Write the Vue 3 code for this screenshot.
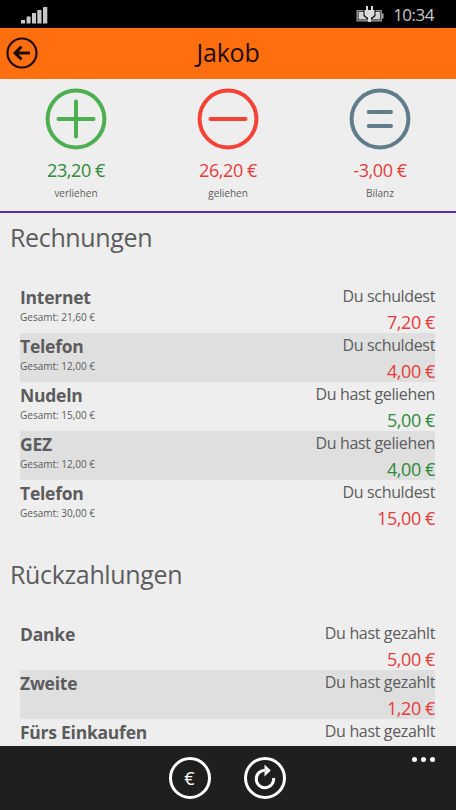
<template>
  <div class="phone">
    <div class="status">
      <svg class="signal" width="28" height="18" viewBox="0 0 28 18" fill="#c8c8c8">
        <rect x="0" y="14" width="4" height="3.5" />
        <rect x="5.6" y="10.5" width="4" height="7" />
        <rect x="11" y="7" width="4" height="10.5" />
        <rect x="16.3" y="4" width="4.2" height="13.5" />
        <rect x="22" y="1" width="4.3" height="16.5" />
      </svg>
      <div class="status-right">
        <svg class="battery" width="29" height="16" viewBox="0 0 29 16">
          <rect x="2.2" y="4.8" width="24" height="10" fill="none" stroke="#999" stroke-width="1.4" />
          <rect x="3.5" y="6" width="21.500" height="7.500" fill="#d4d4d4" />
          <rect x="26.500" y="7.500" width="2" height="5" fill="#aaa" />
          <path d="M8.500 3.500h12v6.500l-3 2.500v.500h-6v-.5l-3-2.500z" fill="#000" />
          <path d="M11 0h2v4h3v-4h2v4h1.500v5l-2.500 2.500h-1v4.500h-3v-4.500h-1l-2.500-2.500v-5h1.500z" fill="#dcdcdc" />
        </svg>
        <span class="clock">10:34</span>
      </div>
    </div>

    <header class="header">
      <button class="back">
        <svg width="32" height="32" viewBox="0 0 32 32" fill="none" stroke="#1c0c02">
          <circle cx="16" cy="16" r="14.5" stroke-width="2.2" />
          <path d="M24 16H9.5M15.500 9.600L9 16l6.500 6.400" stroke-width="2.9" />
        </svg>
      </button>
      <h1>Jakob</h1>
    </header>

    <section class="summary">
      <div v-for="s in summary" :key="s.label" class="summary-item">
        <svg width="62" height="62" viewBox="0 0 62 62" fill="none" :class="s.icon">
          <circle cx="31" cy="31" r="28.4" stroke-width="4" />
          <path :d="icons[s.icon]" stroke-width="4" stroke-linecap="round" />
        </svg>
        <span class="value" :class="s.color">{{ s.value }}</span>
        <span class="label">{{ s.label }}</span>
      </div>
    </section>

    <main class="content">
      <section v-for="g in groups" :key="g.title" class="group">
        <h2>{{ g.title }}</h2>
        <ul>
          <li v-for="(item, i) in g.items" :key="i">
            <div class="left">
              <span class="name">{{ item.name }}</span>
              <span v-if="item.total" class="total">Gesamt: {{ item.total }} €</span>
            </div>
            <div class="right">
              <span class="kind">{{ item.kind }}</span>
              <span v-if="item.amount" class="amount" :class="item.color">{{ item.amount }} €</span>
            </div>
          </li>
        </ul>
      </section>
    </main>

    <footer class="appbar">
      <button class="round">€</button>
      <button class="round">
        <svg width="24" height="28" viewBox="0 0 24 28">
          <path d="M12.500 6.300A8.700 8.700 0 1 0 20.600 14" fill="none" stroke="#fff" stroke-width="3" />
          <path d="M11.500 0.500L17.800 6.500l-6.300 6V8.500L13 6.500l-1.500-2z" fill="#fff" />
        </svg>
      </button>
      <div class="more"><i></i><i></i><i></i></div>
    </footer>
  </div>
</template>

<script setup>
import { ref } from 'vue'

const icons = {
  plus: 'M13.500 31h35M31 13.500v35',
  minus: 'M13.500 31h35',
  equals: 'M19.700 24h22.300M19.700 38h22.300'
}

const summary = ref([
  { icon: 'plus', value: '23,20 €', label: 'verliehen', color: 'green' },
  { icon: 'minus', value: '26,20 €', label: 'geliehen', color: 'red' },
  { icon: 'equals', value: '-3,00 €', label: 'Bilanz', color: 'red' }
])

const groups = ref([
  {
    title: 'Rechnungen',
    items: [
      { name: 'Internet', total: '21,60', kind: 'Du schuldest', amount: '7,20', color: 'red' },
      { name: 'Telefon', total: '12,00', kind: 'Du schuldest', amount: '4,00', color: 'red' },
      { name: 'Nudeln', total: '15,00', kind: 'Du hast geliehen', amount: '5,00', color: 'green' },
      { name: 'GEZ', total: '12,00', kind: 'Du hast geliehen', amount: '4,00', color: 'green' },
      { name: 'Telefon', total: '30,00', kind: 'Du schuldest', amount: '15,00', color: 'red' }
    ]
  },
  {
    title: 'Rückzahlungen',
    items: [
      { name: 'Danke', kind: 'Du hast gezahlt', amount: '5,00', color: 'red' },
      { name: 'Zweite', kind: 'Du hast gezahlt', amount: '1,20', color: 'red' },
      { name: 'Fürs Einkaufen', kind: 'Du hast gezahlt' }
    ]
  }
])
</script>

<style>
body {
  margin: 0;
  overflow: hidden;
}
</style>

<style scoped>
.phone {
  display: flex;
  flex-direction: column;
  height: 810px;
  overflow: hidden;
  background: #eee;
  color: #5c5c5c;
  font-family: 'Open Sans', 'Noto Sans', sans-serif;
}

button {
  padding: 0;
  border: 0;
  background: none;
  color: inherit;
  font: inherit;
}

svg {
  display: block;
}

.status {
  display: flex;
  flex: none;
  justify-content: space-between;
  height: 28px;
  padding: 0 22px 0 21px;
  background: #000;
}

.signal {
  margin-top: 5.5px;
}

.status-right {
  display: flex;
  gap: 9px;
}

.battery {
  margin-top: 6px;
}

.clock {
  color: #c8c8c8;
  font-size: 17px;
  line-height: 30px;
  letter-spacing: -0.5px;
}

.header {
  display: grid;
  flex: none;
  grid-template-columns: 40px 1fr 40px;
  align-items: center;
  height: 51px;
  background: #ff6f0f;
}

.back {
  margin: -2px 0 0 6px;
}

h1 {
  margin: -3px 0 0;
  color: #200d02;
  font-size: 25px;
  font-weight: 400;
  line-height: 48px;
  letter-spacing: -0.2px;
  text-align: center;
}

.summary {
  display: grid;
  flex: none;
  grid-template-columns: repeat(3, 1fr);
  box-sizing: border-box;
  height: 134px;
  padding-top: 9px;
  border-bottom: 2px solid #5a2fae;
}

.summary-item {
  display: flex;
  flex-direction: column;
  align-items: center;
}

.plus {
  stroke: #4caf50;
}

.minus {
  stroke: #f44336;
}

.equals {
  stroke: #607d8b;
}

.value {
  margin-top: 6px;
  font-size: 18px;
  line-height: 28px;
  letter-spacing: -0.4px;
}

.label {
  font-size: 10px;
  line-height: 18px;
}

.red {
  color: #e53c3a;
}

.green {
  color: #2f8a3a;
}

.content {
  flex: 1;
  min-height: 0;
  overflow: hidden;
}

.group {
  height: 337px;
}

h2 {
  margin: 0 0 22px 10px;
  font-size: 25px;
  font-weight: 400;
  line-height: 49px;
  letter-spacing: -0.35px;
}

ul {
  margin: 0 21px 0 20px;
  padding: 0;
  list-style: none;
}

li {
  display: flex;
  justify-content: space-between;
  height: 49px;
}

li:nth-child(even) {
  background: #dfdfdf;
}

.left,
.right {
  display: flex;
  flex-direction: column;
}

.right {
  align-items: flex-end;
}

.name {
  font-size: 17.5px;
  font-weight: 700;
  line-height: 27px;
  letter-spacing: -0.25px;
}

.total {
  font-size: 10px;
  line-height: 12px;
}

.kind {
  font-size: 16px;
  line-height: 25px;
  letter-spacing: -0.35px;
}

.amount {
  font-size: 18px;
  line-height: 27px;
  letter-spacing: -0.4px;
}

.appbar {
  position: relative;
  display: flex;
  flex: none;
  justify-content: center;
  gap: 33px;
  box-sizing: border-box;
  height: 64px;
  padding-right: 2px;
  background: #1f1f1f;
}

.round {
  display: flex;
  align-items: center;
  justify-content: center;
  box-sizing: border-box;
  width: 42px;
  height: 42px;
  margin-top: 11px;
  border: 3px solid #fff;
  border-radius: 50%;
  color: #fff;
  font-size: 18px;
}

.more {
  position: absolute;
  top: 11px;
  right: 21px;
  display: flex;
  gap: 4px;
}

.more i {
  width: 5px;
  height: 5px;
  border-radius: 50%;
  background: #fff;
}
</style>
